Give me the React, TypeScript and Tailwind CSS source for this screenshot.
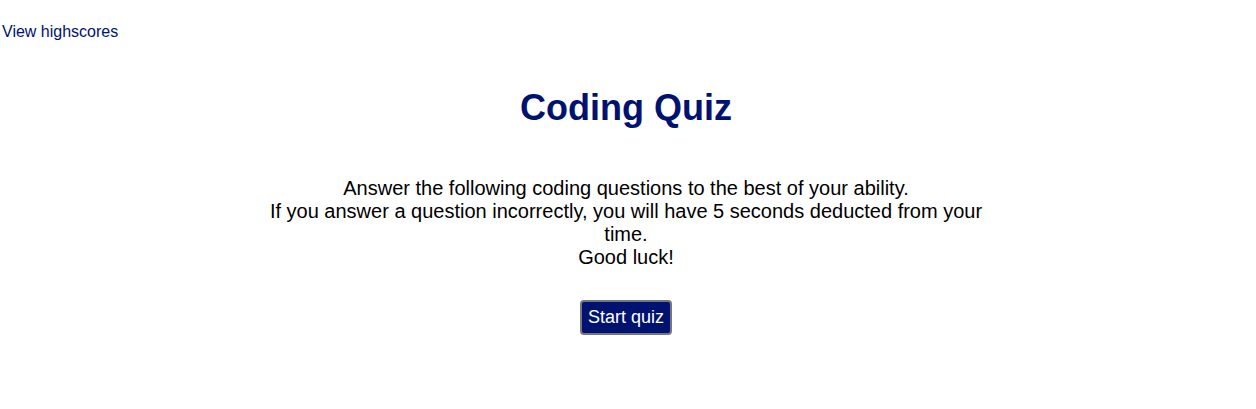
export default function App() {
  return (
    <div className="min-h-[409px] bg-white font-['Liberation_Sans',Arial,sans-serif]">
      <header className="px-[2px] pt-[20px]">
        <a href="#" className="text-[16px] leading-[20px] text-[#001270]">
          View highscores
        </a>
      </header>

      <main className="flex flex-col items-center pr-[4px]">
        <h1 className="mt-[43px] text-[36px] font-bold leading-[42px] text-[#001270]">Coding Quiz</h1>
        <p className="mt-[48px] w-[740px] text-center text-[20px] leading-[23px] text-black">
          Answer the following coding questions to the best of your ability.
          <br />
          If you answer a question incorrectly, you will have 5 seconds deducted from your time.
          <br />
          Good luck!
        </p>
        <button className="mt-[31px] h-[35px] rounded-[4px] border-2 border-[#767680] bg-[#001270] px-[6px] text-[18px] text-white">
          Start quiz
        </button>
      </main>
    </div>
  );
}
